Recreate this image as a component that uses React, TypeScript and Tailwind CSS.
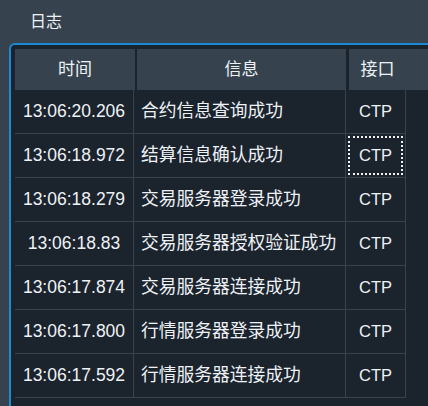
import React from "react";

const rows = [
  { t: "13:06:20.206", m: "合约信息查询成功", i: "CTP" },
  { t: "13:06:18.972", m: "结算信息确认成功", i: "CTP", focus: true },
  { t: "13:06:18.279", m: "交易服务器登录成功", i: "CTP" },
  { t: "13:06:18.83", m: "交易服务器授权验证成功", i: "CTP" },
  { t: "13:06:17.874", m: "交易服务器连接成功", i: "CTP" },
  { t: "13:06:17.800", m: "行情服务器登录成功", i: "CTP" },
  { t: "13:06:17.592", m: "行情服务器连接成功", i: "CTP" },
];

const font = { fontFamily: '"Liberation Sans", "Noto Sans CJK SC", sans-serif' };

export default function App() {
  return (
    <div
      className="w-[428px] h-[406px] overflow-hidden bg-[#36424e] text-[#eef2f6] flex flex-col"
      style={font}
    >
      <div className="h-[43px] shrink-0 pl-[30px] pt-[12px] text-[16px] leading-[20px]">日志</div>
      <div className="flex-1 ml-[9px] border-l-2 border-t-2 border-[#1b8bd6] rounded-tl-[6px] bg-[#1b232d] pl-[4px] pt-[4px] flex flex-col">
        <div className="h-[41px] shrink-0 flex text-[17px]">
          <div className="w-[120px] bg-[#36434f] flex items-center justify-center">时间</div>
          <div className="w-[2px]" />
          <div className="w-[209px] bg-[#36434f] flex items-center justify-center">信息</div>
          <div className="w-[3px]" />
          <div className="flex-1 bg-[#36434f] flex items-center">
            <div className="w-[57px] flex justify-center">接口</div>
          </div>
        </div>
        <div className="flex flex-col w-[391px]">
          {rows.map((r, k) => (
            <div key={k} className="h-[44px] flex border-b border-[#36424e]">
              <div className="w-[119px] border-r border-[#36424e] flex items-center justify-center text-[17.5px]">
                {r.t}
              </div>
              <div className="w-[212px] border-r border-[#36424e] flex items-center pl-[7px] text-[17.75px]">
                {r.m}
              </div>
              <div className="w-[60px] border-r border-[#36424e] p-[2px] flex">
                <div
                  className={
                    "flex-1 flex items-center justify-center text-[16.5px] " +
                    (r.focus ? "border-2 border-dotted border-[#f0f0f0]" : "border-2 border-transparent")
                  }
                >
                  {r.i}
                </div>
              </div>
            </div>
          ))}
        </div>
      </div>
    </div>
  );
}
